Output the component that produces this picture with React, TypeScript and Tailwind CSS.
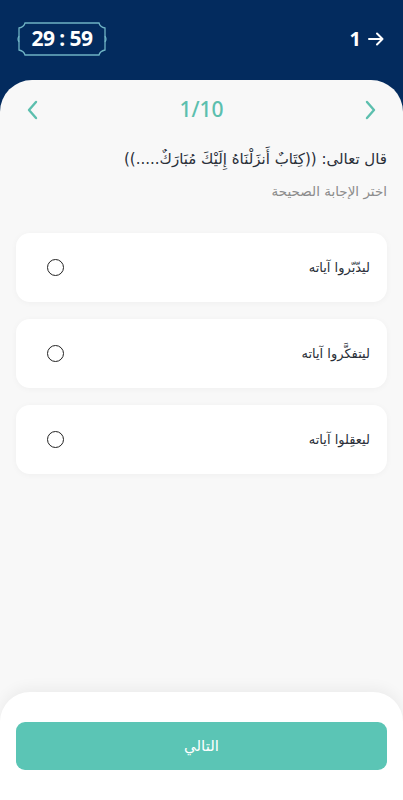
import React, { useState } from 'react';

const options = ['ليدّبّروا آياته', 'ليتفكَّروا آياته', 'ليعقِلوا آياته'];

const arabicFont = { fontFamily: '"DejaVu Sans", "Noto Sans", sans-serif' };

function TimerFrame({ time }: { time: string }) {
  return (
    <div className="relative w-[92px] h-[36px] flex items-center justify-center">
      <svg
        className="absolute inset-0"
        width="92"
        height="36"
        viewBox="0 0 92 36"
        fill="none"
      >
        <path
          d="M9 2 H83 Q84 6 89 7 V29 Q84 30 83 34 H9 Q8 30 3 29 V7 Q8 6 9 2 Z"
          stroke="#6fb3c4"
          strokeWidth="1.3"
        />
        <path d="M3 15 Q1 18 3 21" stroke="#6fb3c4" strokeWidth="1.2" />
        <path d="M89 15 Q91 18 89 21" stroke="#6fb3c4" strokeWidth="1.2" />
      </svg>
      <span className="relative text-white text-[21px] font-bold font-['Noto_Sans',sans-serif] tracking-tight">
        {time}
      </span>
    </div>
  );
}

export default function App() {
  const [selected, setSelected] = useState<number | null>(null);

  return (
    <div className="h-[800px] w-full bg-[#032b5e] flex flex-col overflow-hidden">
      <header className="h-[80px] shrink-0 px-4 pb-[3px] flex items-center justify-between">
        <TimerFrame time="29 : 59" />
        <div className="flex items-center gap-[6px] text-white pr-[2px]">
          <span className="text-[20px] font-bold font-['Noto_Sans',sans-serif]">1</span>
          <svg width="18" height="18" viewBox="0 0 18 18" fill="none">
            <path
              d="M2 9 H15.5 M10 3.5 L15.5 9 L10 14.5"
              stroke="white"
              strokeWidth="2"
              strokeLinecap="round"
              strokeLinejoin="round"
            />
          </svg>
        </div>
      </header>

      <main className="flex-1 bg-[#f8f8f8] rounded-t-[32px] flex flex-col relative">
        <div className="flex items-center justify-between px-[26px] pt-[9px] h-[50px]">
          <svg width="12" height="20" viewBox="0 0 12 20" fill="none">
            <path
              d="M10 2 L3 10 L10 18"
              stroke="#5cbfae"
              strokeWidth="2.4"
              strokeLinecap="round"
              strokeLinejoin="round"
            />
          </svg>
          <span className="text-[#5cbfae] text-[21px] font-medium font-['Noto_Sans',sans-serif]">
            1/10
          </span>
          <svg width="12" height="20" viewBox="0 0 12 20" fill="none">
            <path
              d="M2 2 L9 10 L2 18"
              stroke="#5cbfae"
              strokeWidth="2.4"
              strokeLinecap="round"
              strokeLinejoin="round"
            />
          </svg>
        </div>

        <div dir="rtl" className="px-4 pt-[17px]" style={arabicFont}>
          <p className="text-[15px] text-[#2a2f38] leading-[24px]">
            قال تعالى: ((كِتَابٌ أَنزَلْنَاهُ إِلَيْكَ مُبَارَكٌ.....))
          </p>
          <p className="text-[13.5px] text-[#8c8c8c] mt-[10px] leading-[20px]">
            اختر الإجابة الصحيحة
          </p>
        </div>

        <div className="px-4 mt-[32px] flex flex-col gap-[17px]">
          {options.map((opt, i) => (
            <button
              key={opt}
              onClick={() => setSelected(i)}
              className="h-[69px] bg-white rounded-[14px] shadow-[0_1px_6px_rgba(0,0,0,0.04)] flex items-center justify-between pl-[31px] pr-[17px]"
            >
              <span className="w-[17px] h-[17px] rounded-full border-[1.8px] border-[#222] flex items-center justify-center">
                {selected === i && <span className="w-[9px] h-[9px] rounded-full bg-[#5cbfae]" />}
              </span>
              <span dir="rtl" className="text-[13px] text-[#2a2f38]" style={arabicFont}>
                {opt}
              </span>
            </button>
          ))}
        </div>

        <div className="mt-auto bg-white rounded-t-[30px] shadow-[0_-4px_14px_rgba(0,0,0,0.05)] h-[108px] px-4 pt-[30px]">
          <button
            className="w-full h-[48px] rounded-[9px] bg-[#5bc5b5] text-white text-[15px]"
            style={arabicFont}
          >
            التالي
          </button>
        </div>
      </main>
    </div>
  );
}
